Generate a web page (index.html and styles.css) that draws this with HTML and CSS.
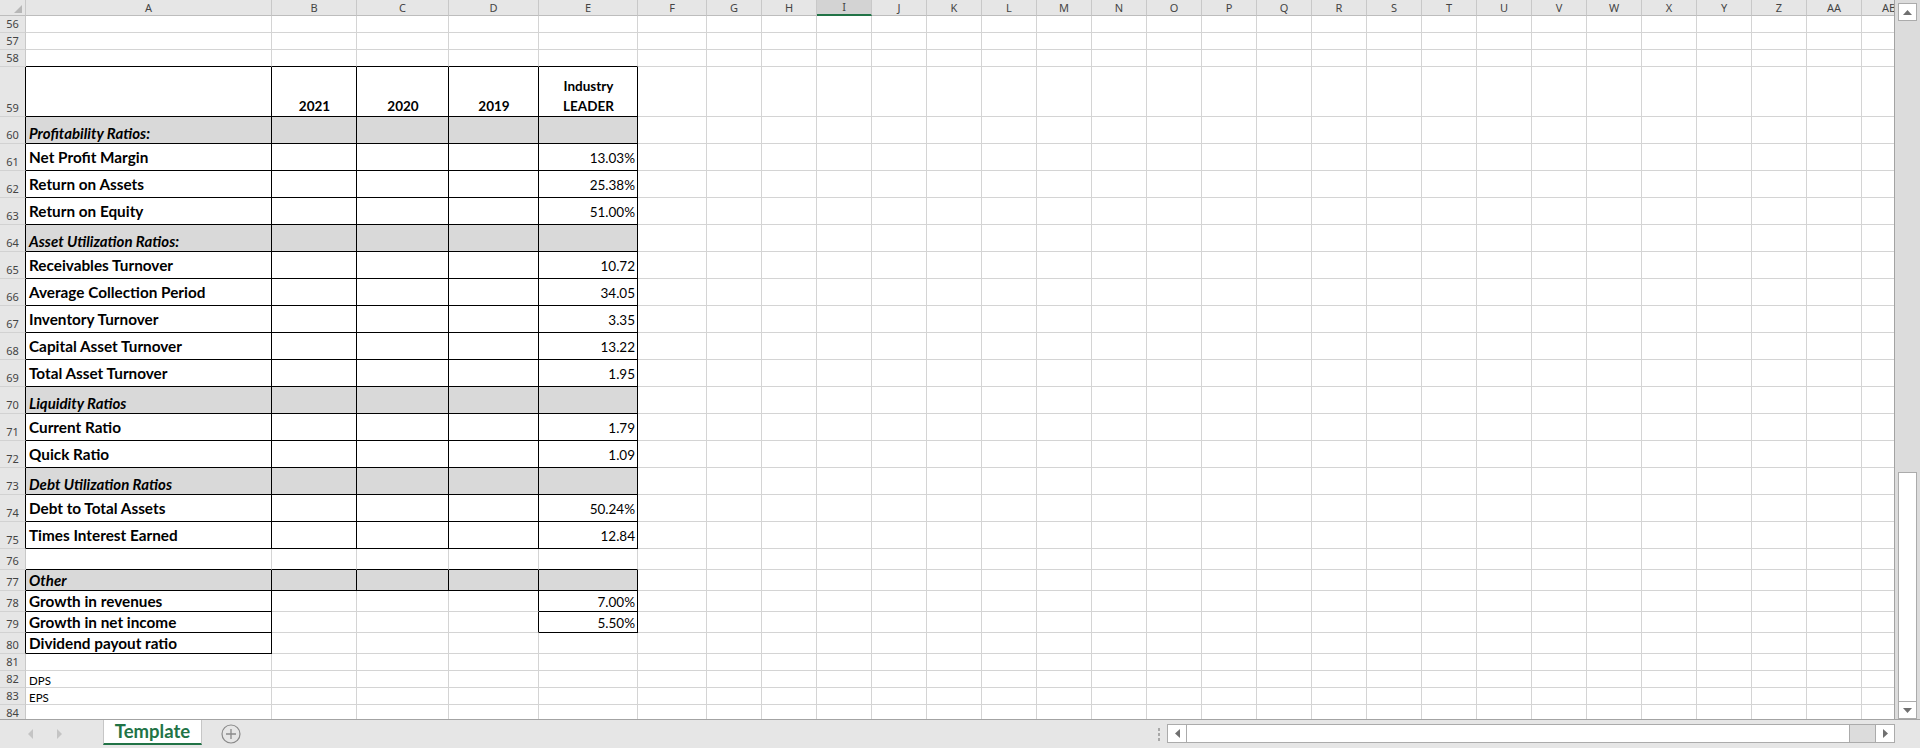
FILE: index.html
```html
<!DOCTYPE html>
<html>
<head>
<meta charset="utf-8">
<title>Template</title>
<link rel="stylesheet" href="styles.css">
</head>
<body>
<div class="app">
  <div class="main">
    <div class="sheet">
      <div class="colhead">
        <div class="ch corner"><svg width="26" height="15" viewBox="0 0 26 15"><polygon points="22,5 22,13 14,13" fill="#b7b7b7"/></svg></div>
        <div class="ch">A</div><div class="ch">B</div><div class="ch">C</div><div class="ch">D</div><div class="ch">E</div><div class="ch">F</div>
        <div class="ch">G</div><div class="ch">H</div><div class="ch sel">I</div><div class="ch">J</div><div class="ch">K</div><div class="ch">L</div>
        <div class="ch">M</div><div class="ch">N</div><div class="ch">O</div><div class="ch">P</div><div class="ch">Q</div><div class="ch">R</div>
        <div class="ch">S</div><div class="ch">T</div><div class="ch">U</div><div class="ch">V</div><div class="ch">W</div><div class="ch">X</div>
        <div class="ch">Y</div><div class="ch">Z</div><div class="ch">AA</div><div class="ch">AB</div>
      </div>

      <div class="row h17"><div class="rh">56</div><div class="c"></div><div class="c"></div><div class="c"></div><div class="c"></div><div class="c"></div><div class="c"></div><div class="rest"></div></div>
      <div class="row h17"><div class="rh">57</div><div class="c"></div><div class="c"></div><div class="c"></div><div class="c"></div><div class="c"></div><div class="c"></div><div class="rest"></div></div>
      <div class="row h17"><div class="rh">58</div><div class="c kb"></div><div class="c kb"></div><div class="c kb"></div><div class="c kb"></div><div class="c kb"></div><div class="c"></div><div class="rest"></div></div>

      <div class="row h50"><div class="rh kr">59</div><div class="c k"></div><div class="c k hd">2021</div><div class="c k hd">2020</div><div class="c k hd">2019</div><div class="c k hd two">Industry<br>LEADER</div><div class="c"></div><div class="rest"></div></div>

      <div class="row h27"><div class="rh kr">60</div><div class="c k g sec">Profitability Ratios:</div><div class="c k g"></div><div class="c k g"></div><div class="c k g"></div><div class="c k g"></div><div class="c"></div><div class="rest"></div></div>
      <div class="row h27"><div class="rh kr">61</div><div class="c k lbl">Net Profit Margin</div><div class="c k"></div><div class="c k"></div><div class="c k"></div><div class="c k num">13.03%</div><div class="c"></div><div class="rest"></div></div>
      <div class="row h27"><div class="rh kr">62</div><div class="c k lbl">Return on Assets</div><div class="c k"></div><div class="c k"></div><div class="c k"></div><div class="c k num">25.38%</div><div class="c"></div><div class="rest"></div></div>
      <div class="row h27"><div class="rh kr">63</div><div class="c k lbl">Return on Equity</div><div class="c k"></div><div class="c k"></div><div class="c k"></div><div class="c k num">51.00%</div><div class="c"></div><div class="rest"></div></div>
      <div class="row h27"><div class="rh kr">64</div><div class="c k g sec">Asset Utilization Ratios:</div><div class="c k g"></div><div class="c k g"></div><div class="c k g"></div><div class="c k g"></div><div class="c"></div><div class="rest"></div></div>
      <div class="row h27"><div class="rh kr">65</div><div class="c k lbl">Receivables Turnover</div><div class="c k"></div><div class="c k"></div><div class="c k"></div><div class="c k num">10.72</div><div class="c"></div><div class="rest"></div></div>
      <div class="row h27"><div class="rh kr">66</div><div class="c k lbl">Average Collection Period</div><div class="c k"></div><div class="c k"></div><div class="c k"></div><div class="c k num">34.05</div><div class="c"></div><div class="rest"></div></div>
      <div class="row h27"><div class="rh kr">67</div><div class="c k lbl">Inventory Turnover</div><div class="c k"></div><div class="c k"></div><div class="c k"></div><div class="c k num">3.35</div><div class="c"></div><div class="rest"></div></div>
      <div class="row h27"><div class="rh kr">68</div><div class="c k lbl">Capital Asset Turnover</div><div class="c k"></div><div class="c k"></div><div class="c k"></div><div class="c k num">13.22</div><div class="c"></div><div class="rest"></div></div>
      <div class="row h27"><div class="rh kr">69</div><div class="c k lbl">Total Asset Turnover</div><div class="c k"></div><div class="c k"></div><div class="c k"></div><div class="c k num">1.95</div><div class="c"></div><div class="rest"></div></div>
      <div class="row h27"><div class="rh kr">70</div><div class="c k g sec">Liquidity Ratios</div><div class="c k g"></div><div class="c k g"></div><div class="c k g"></div><div class="c k g"></div><div class="c"></div><div class="rest"></div></div>
      <div class="row h27"><div class="rh kr">71</div><div class="c k lbl">Current Ratio</div><div class="c k"></div><div class="c k"></div><div class="c k"></div><div class="c k num">1.79</div><div class="c"></div><div class="rest"></div></div>
      <div class="row h27"><div class="rh kr">72</div><div class="c k lbl">Quick Ratio</div><div class="c k"></div><div class="c k"></div><div class="c k"></div><div class="c k num">1.09</div><div class="c"></div><div class="rest"></div></div>
      <div class="row h27"><div class="rh kr">73</div><div class="c k g sec">Debt Utilization Ratios</div><div class="c k g"></div><div class="c k g"></div><div class="c k g"></div><div class="c k g"></div><div class="c"></div><div class="rest"></div></div>
      <div class="row h27"><div class="rh kr">74</div><div class="c k lbl">Debt to Total Assets</div><div class="c k"></div><div class="c k"></div><div class="c k"></div><div class="c k num">50.24%</div><div class="c"></div><div class="rest"></div></div>
      <div class="row h27"><div class="rh kr">75</div><div class="c k lbl">Times Interest Earned</div><div class="c k"></div><div class="c k"></div><div class="c k"></div><div class="c k num">12.84</div><div class="c"></div><div class="rest"></div></div>

      <div class="row h21"><div class="rh">76</div><div class="c kb"></div><div class="c kb"></div><div class="c kb"></div><div class="c kb"></div><div class="c kb"></div><div class="c"></div><div class="rest"></div></div>
      <div class="row h21"><div class="rh kr">77</div><div class="c k g sec low">Other</div><div class="c k g"></div><div class="c k g"></div><div class="c k g"></div><div class="c k g"></div><div class="c"></div><div class="rest"></div></div>
      <div class="row h21"><div class="rh kr">78</div><div class="c k lbl mid">Growth in revenues</div><div class="c"></div><div class="c"></div><div class="c kr"></div><div class="c k num mid">7.00%</div><div class="c"></div><div class="rest"></div></div>
      <div class="row h21"><div class="rh kr">79</div><div class="c k lbl mid">Growth in net income</div><div class="c"></div><div class="c"></div><div class="c kr"></div><div class="c k num mid">5.50%</div><div class="c"></div><div class="rest"></div></div>
      <div class="row h21"><div class="rh kr">80</div><div class="c k lbl mid">Dividend payout ratio</div><div class="c"></div><div class="c"></div><div class="c"></div><div class="c"></div><div class="c"></div><div class="rest"></div></div>

      <div class="row h17"><div class="rh">81</div><div class="c"></div><div class="c"></div><div class="c"></div><div class="c"></div><div class="c"></div><div class="c"></div><div class="rest"></div></div>
      <div class="row h17"><div class="rh">82</div><div class="c sm">DPS</div><div class="c"></div><div class="c"></div><div class="c"></div><div class="c"></div><div class="c"></div><div class="rest"></div></div>
      <div class="row h17"><div class="rh">83</div><div class="c sm">EPS</div><div class="c"></div><div class="c"></div><div class="c"></div><div class="c"></div><div class="c"></div><div class="rest"></div></div>
      <div class="row h17"><div class="rh">84</div><div class="c"></div><div class="c"></div><div class="c"></div><div class="c"></div><div class="c"></div><div class="c"></div><div class="rest"></div></div>
    </div>

    <div class="vscroll">
      <div class="vbtn"><svg width="9" height="5" viewBox="0 0 9 5"><polygon points="0,5 9,5 4.5,0" fill="#707070"/></svg></div>
      <div class="vtrack"></div>
      <div class="vthumb"></div>
      <div class="vbtn down"><svg width="9" height="5" viewBox="0 0 9 5"><polygon points="0,0 9,0 4.5,5" fill="#707070"/></svg></div>
    </div>
  </div>

  <div class="tabbar">
    <div class="navs">
      <svg width="6" height="10" viewBox="0 0 6 10"><polygon points="5,0 5,10 0,5" fill="#c4c4c4"/></svg>
      <svg width="6" height="10" viewBox="0 0 6 10"><polygon points="1,0 1,10 6,5" fill="#c4c4c4"/></svg>
    </div>
    <div class="tab">Template</div>
    <div class="add"><svg width="20" height="20" viewBox="0 0 20 20"><circle cx="10" cy="10" r="9" fill="none" stroke="#8a8a8a" stroke-width="1.2"/><path d="M10 5v10M5 10h10" stroke="#8a8a8a" stroke-width="1.3"/></svg></div>
    <div class="spacer"></div>
    <div class="split"><i></i><i></i><i></i></div>
    <div class="hscroll">
      <div class="hbtn"><svg width="5" height="9" viewBox="0 0 5 9"><polygon points="5,0 5,9 0,4.5" fill="#707070"/></svg></div>
      <div class="hthumb"></div>
      <div class="htrack"></div>
      <div class="hbtn right"><svg width="5" height="9" viewBox="0 0 5 9"><polygon points="0,0 0,9 5,4.5" fill="#707070"/></svg></div>
    </div>
    <div class="corner2"></div>
  </div>
</div>
</body>
</html>
```

FILE: styles.css
```css
* { box-sizing: border-box; }
html, body { margin: 0; padding: 0; }
body {
  width: 1920px;
  height: 748px;
  overflow: hidden;
  background: #ffffff;
  font-family: Lato, "Liberation Sans", sans-serif;
  color: #000;
}
.app { display: flex; flex-direction: column; height: 748px; }
.main { display: flex; height: 719px; }
.sheet {
  width: 1895px;
  height: 719px;
  overflow: hidden;
  border-right: 1px solid #a3a3a3;
  flex: none;
}

/* column header */
.colhead {
  display: grid;
  grid-template-columns: 26px 246px 85px 92px 90px 99px 69px repeat(22, 55px);
  height: 16px;
}
.ch {
  background: #e6e6e6;
  border-right: 1px solid #c8c8c8;
  border-bottom: 1px solid #bdbdbd;
  font-family: "Noto Sans", "Open Sans", sans-serif;
  font-size: 11px;
  line-height: 15px;
  color: #444;
  text-align: center;
  overflow: hidden;
}
.ch.corner { padding: 0; }
.ch.corner svg { display: block; }
.ch.sel { background: #d3d3d3; border-bottom: 2px solid #217346; line-height: 14px; }

/* rows */
.row {
  display: grid;
  grid-template-columns: 26px 246px 85px 92px 90px 99px 69px 1fr;
}
.h17 { height: 17px; }
.h21 { height: 21px; }
.h27 { height: 27px; }
.h50 { height: 50px; }

.rh {
  background: #e6e6e6;
  border-right: 1px solid #c8c8c8;
  border-bottom: 1px solid #d2d2d2;
  font-family: "Noto Sans", "Open Sans", sans-serif;
  font-size: 11px;
  line-height: 14px;
  color: #444;
  display: flex;
  align-items: flex-end;
  justify-content: center;
  padding-bottom: 1px;
}
.c {
  border-right: 1px solid #d4d4d4;
  border-bottom: 1px solid #d4d4d4;
  display: flex;
  align-items: flex-end;
  white-space: nowrap;
  overflow: hidden;
  padding: 0 2px 0 3px;
}
.rest {
  border-bottom: 1px solid #d4d4d4;
  background: repeating-linear-gradient(to right, transparent 0 54px, #d4d4d4 54px 55px);
}
.k { border-right-color: #000; border-bottom-color: #000; }
.kr { border-right-color: #000; }
.kb { border-bottom-color: #000; }
.g { background: #d9d9d9; }

.lbl { font-weight: 700; font-size: 15.3px; padding-bottom: 4px; }
.sec { font-weight: 700; font-style: italic; font-size: 15px; padding-bottom: 1px; }
.sec.low { padding-bottom: 1px; }
.num { justify-content: flex-end; font-size: 13.5px; padding-bottom: 4px; }
.mid { padding-bottom: 1px; }
.hd {
  justify-content: center;
  text-align: center;
  font-weight: 700;
  font-size: 13.5px;
  line-height: 20px;
  padding-bottom: 0;
}
.sm { font-size: 11.5px; padding-bottom: 0; }

/* vertical scrollbar */
.vscroll {
  width: 25px;
  height: 719px;
  background: #dcdcdc;
  display: flex;
  flex-direction: column;
  align-items: flex-start;
  padding: 3px 0 0 3px;
}
.vbtn {
  width: 19px;
  height: 18px;
  background: #fff;
  border: 1px solid #ababab;
  display: flex;
  align-items: center;
  justify-content: center;
  flex: none;
}
.vtrack { height: 451px; flex: none; }
.vthumb {
  width: 19px;
  height: 229px;
  background: #fff;
  border: 1px solid #ababab;
  border-bottom: none;
  flex: none;
}
.vbtn.down { height: 18px; }

/* tab bar */
.tabbar {
  height: 29px;
  background: #e6e6e6;
  border-top: 1px solid #a3a3a3;
  display: flex;
  align-items: flex-start;
}
.navs {
  width: 103px;
  height: 28px;
  display: flex;
  align-items: center;
  gap: 22px;
  padding-left: 28px;
}
.tab {
  width: 99px;
  height: 25px;
  background: #fff;
  border-left: 1px solid #c6c6c6;
  border-right: 1px solid #c6c6c6;
  border-bottom: 2px solid #217346;
  color: #217346;
  font-weight: 700;
  font-size: 18.5px;
  text-align: center;
  line-height: 22px;
}
.add {
  width: 40px;
  height: 28px;
  display: flex;
  align-items: center;
  justify-content: flex-end;
  padding-right: 1px;
}
.spacer { flex: 1; }
.split {
  width: 16px;
  height: 28px;
  display: flex;
  flex-direction: column;
  align-items: center;
  justify-content: center;
  gap: 2px;
}
.split i { display: block; width: 2px; height: 3px; background: #a8a8a8; }
.hscroll {
  width: 728px;
  height: 19px;
  margin-top: 4px;
  display: flex;
  border: 1px solid #ababab;
  background: #fff;
}
.hbtn {
  width: 19px;
  height: 17px;
  display: flex;
  align-items: center;
  justify-content: center;
  border-right: 1px solid #ababab;
  flex: none;
}
.hbtn.right { border-right: none; border-left: 1px solid #ababab; }
.hthumb { width: 663px; flex: none; border-right: 1px solid #ababab; }
.htrack { flex: 1; background: #dcdcdc; }
.corner2 { width: 25px; }
```
